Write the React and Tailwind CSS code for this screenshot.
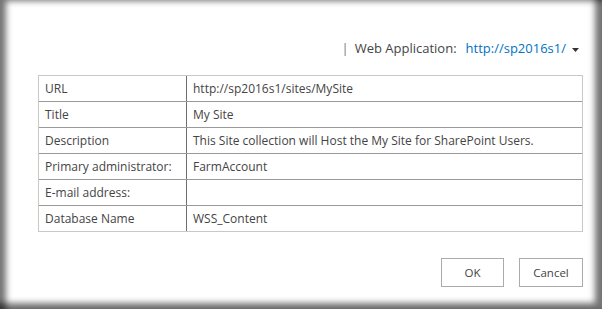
export default function App() {
  const rows = [
    ['URL', 'http://sp2016s1/sites/MySite'],
    ['Title', 'My Site'],
    ['Description', 'This Site collection will Host the My Site for SharePoint Users.'],
    ['Primary administrator:', 'FarmAccount'],
    ['E-mail address:', ''],
    ['Database Name', 'WSS_Content'],
  ];

  return (
    <div className="w-[602px] h-[309px] bg-white shadow-[inset_7px_2px_6px_-1px_rgba(0,0,0,0.55),inset_-8px_-7px_6px_-1px_rgba(0,0,0,0.55)] font-['Open_Sans',sans-serif] text-[#444] flex flex-col">
      <div className="flex items-center justify-end pt-[38px] pr-[23px] text-[13px] h-[60px]">
        <span className="text-[#777] mr-[6px]">|</span>
        <span>Web Application:</span>
        <span className="ml-[9px] text-[#0072c6]">http://sp2016s1/</span>
        <svg className="ml-[6px] mt-[2px]" width="7" height="4" viewBox="0 0 7 4">
          <path d="M0 0h7L3.5 4z" fill="#333" />
        </svg>
      </div>
      <div className="ml-[38px] mr-[19px] mt-[15px] border border-[#c8c8c8]">
        {rows.map(([label, value], i) => (
          <div
            key={label}
            className={`flex items-center text-[12px] ${i > 0 ? 'h-[26px] border-t border-[#9a9a9a]' : 'h-[25px]'}`}
          >
            <div className="w-[148px] h-full flex items-center pl-[6px] border-r border-[#6e6e6e]">{label}</div>
            <div className="flex-1 pl-[6px]">{value}</div>
          </div>
        ))}
      </div>
      <div className="flex justify-end gap-[15px] mr-[19px] mt-[26px]">
        <button className="w-[63px] h-[29px] border border-[#ababab] bg-white text-[11.5px] text-[#444]">OK</button>
        <button className="w-[64px] h-[29px] border border-[#ababab] bg-white text-[11.5px] text-[#444]">Cancel</button>
      </div>
    </div>
  );
}
